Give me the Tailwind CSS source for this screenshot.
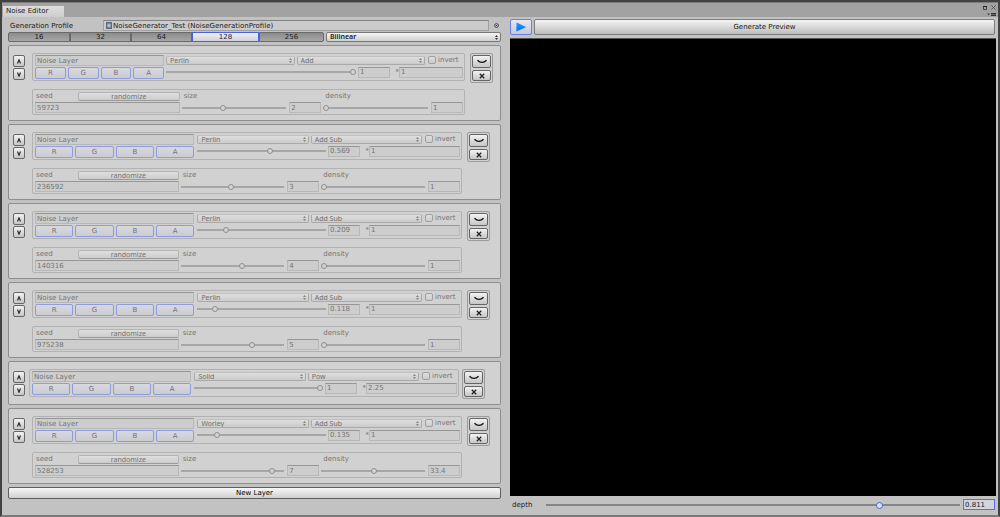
<!DOCTYPE html>
<html lang="en">
<head>
<meta charset="utf-8">
<title>Noise Editor</title>
<script src="https://cdn.jsdelivr.net/npm/@tailwindcss/browser@4"></script>
</head>
<body class="min-h-screen flex flex-col bg-[#c2c2c2] border-x-2 border-t-2 border-[#424242] border-b-2 border-b-[#7a7a7a] font-['DejaVu_Sans',sans-serif] text-[7px] leading-[10px] text-[#202020]">
  <header class="h-[15px] flex items-end justify-between bg-[#a2a2a2] border-t border-[#7c7c7c] pl-px pr-[2px]">
    <h1 class="w-[61px] h-[11px] pl-[3px] leading-[11px] bg-linear-to-b from-[#dedede] to-[#cecece]">Noise Editor</h1>
    <div class="flex flex-col items-end gap-[3px] pb-px">
      <div class="flex items-center gap-1">
        <button aria-label="Maximize" class="block"><svg class="block" width="4" height="4" viewBox="0 0 4 4"><path d="M.5 1v2.5h3V1" fill="none" stroke="#444"/><path d="M0 .5h4" stroke="#222"/></svg></button>
        <button aria-label="Close" class="block"><svg class="block" width="5" height="5" viewBox="0 0 5 5"><path d="M.3.3l4.4 4.4M4.700.3L.3 4.700" stroke="#555" stroke-width=".9"/></svg></button>
      </div>
      <button aria-label="Window menu" class="block"><svg class="block" width="9" height="3" viewBox="0 0 9 3"><path d="M0 .5h3L1.500 2.500z" fill="#444"/><path d="M4 .5h5M4 2.500h5" stroke="#333"/><path d="M4 1.500h5" stroke="#666"/></svg></button>
    </div>
  </header>

  <main class="flex-1 grid grid-cols-[493fr_486fr] gap-[9px] pl-[6px] pr-[2px]">
    <section class="flex flex-col gap-[3px] pt-[3px]">
      <div class="flex flex-col gap-px">
        <div class="flex items-center">
          <label for="profile" class="w-[95px] pl-[2px]">Generation Profile</label>
          <div class="flex-1 h-[11px] flex items-center gap-px border border-[#a0a0a0] border-t-[#828282] bg-[#cbcbcb] pl-[2px]">
            <svg width="6" height="7" viewBox="0 0 6 7"><path d="M0 0h6v7H0z" fill="#5d6c74"/><path d="M1 1.500h4v4H1z" fill="#8fa3ac"/><path d="M2 2.500h2v2H2z" fill="#b9c8cf"/></svg>
            <input id="profile" readonly value="NoiseGenerator_Test (NoiseGenerationProfile)" class="flex-1 min-w-0 h-[9px] outline-none">
          </div>
          <button aria-label="Select profile" class="w-[12px] flex justify-end pr-[2px]"><svg width="5" height="5" viewBox="0 0 5 5"><circle cx="2.500" cy="2.500" r="1.900" fill="none" stroke="#3a3a3a" stroke-width=".9"/><circle cx="2.500" cy="2.500" r=".6" fill="#333"/></svg></button>
        </div>
        <div class="grid grid-cols-[316fr_175fr] gap-[2px]">
          <div id="sizes" class="grid grid-cols-[62fr_61fr_61fr_67fr_65fr]"></div>
          <div class="relative">
            <select aria-label="Filter mode" class="block appearance-none w-full h-[10px] pl-[3px] leading-[8px] font-['Noto_Sans',sans-serif] font-semibold rounded-[2px] border border-[#777] bg-linear-to-b from-[#f5f5f5] to-[#cfcfcf]"><option>Bilinear</option></select>
            <svg class="absolute right-[3px] top-[3px] pointer-events-none" width="3" height="5" viewBox="0 0 3 5"><path d="M0 2L1.500 0 3 2zM0 3h3L1.500 5z" fill="#333"/></svg>
          </div>
        </div>
      </div>
      <div id="layers" class="flex flex-col gap-[3px]"></div>
      <button class="h-[12px] leading-[10px] rounded-[2px] border border-[#5e5e5e] bg-linear-to-b from-[#f7f7f7] to-[#d0d0d0] text-black">New Layer</button>
    </section>

    <section class="flex flex-col gap-[3px] pt-[2px] pb-[5px]">
      <div class="flex gap-[2px] pr-px">
        <button aria-label="Play" class="w-[22px] h-[16px] flex items-center justify-center rounded-[2px] border border-[#6a7de0] bg-linear-to-b from-[#e8e8f2] to-[#c4c8d8]"><svg width="10" height="10" viewBox="0 0 10 10"><path d="M.5.5L10 5 .5 9.500z" fill="#168cff"/><path d="M.5 5H10L.5 9.500z" fill="#086cdf" opacity=".4"/></svg></button>
        <button class="flex-1 h-[16px] rounded-[2px] border border-[#7c7c7c] bg-linear-to-b from-[#f5f5f5] to-[#bdbdbd]">Generate Preview</button>
      </div>
      <div class="flex-1 bg-black border-t border-[#555]"></div>
      <div class="flex items-center gap-[3px] pl-[2px] pr-px">
        <label for="depth" class="w-[31px]">depth</label>
        <input id="depth" type="range" min="0" max="1" step="0.001" value="0.811" class="flex-1 min-w-0 h-[8px] appearance-none bg-transparent [&::-webkit-slider-runnable-track]:h-[2px] [&::-webkit-slider-runnable-track]:bg-[#858585] [&::-webkit-slider-thumb]:appearance-none [&::-webkit-slider-thumb]:size-[7px] [&::-webkit-slider-thumb]:-mt-[2px] [&::-webkit-slider-thumb]:rounded-full [&::-webkit-slider-thumb]:border [&::-webkit-slider-thumb]:border-[#4a62d8] [&::-webkit-slider-thumb]:bg-[#e0e3f2]">
        <input aria-label="depth value" value="0.811" class="w-[32px] h-[11px] pl-px border border-[#5b70e0] bg-[#d2d4de] outline-none">
      </div>
    </section>
  </main>

<script>
const normal = {pad: 'pr-[10px]', indent: 'gap-[7px]', gap: 'gap-[5px]'};
const layers = [
  {...normal, wide: true, pad: 'pr-[7px]', type: 'Perlin', op: 'Add', amount: '1', factor: '1', seed: '59723', size: '2', sizePos: .39, density: '1', densityPos: 0},
  {...normal, type: 'Perlin', op: 'Add Sub', amount: '0.569', factor: '1', seed: '236592', size: '3', sizePos: .49, density: '1', densityPos: 0},
  {...normal, type: 'Perlin', op: 'Add Sub', amount: '0.209', factor: '1', seed: '140316', size: '4', sizePos: .6, density: '1', densityPos: 0},
  {...normal, type: 'Perlin', op: 'Add Sub', amount: '0.118', factor: '1', seed: '975238', size: '5', sizePos: .7, density: '1', densityPos: 0},
  {pad: 'pr-[15px]', indent: 'gap-[4px]', gap: 'gap-[3px]', type: 'Solid', op: 'Pow', amount: '1', factor: '2.25'},
  {...normal, type: 'Worley', op: 'Add Sub', amount: '0.135', factor: '1', seed: '528253', size: '7', sizePos: .9, density: '33.4', densityPos: .51}
];

const field = (id, label, value, cls) => `<input id="${id}" aria-label="${label}" disabled value="${value}" class="${cls} min-w-0 pl-px border border-[#b8b8b8] border-t-[#969696] bg-[#cdcdcd] text-[#747474]">`;

const slider = (label, pos) => `<input type="range" aria-label="${label}" disabled min="0" max="1" step="0.001" value="${pos}" class="flex-1 min-w-0 h-[8px] appearance-none bg-transparent [&::-webkit-slider-runnable-track]:h-[2px] [&::-webkit-slider-runnable-track]:bg-[#a6a6a6] [&::-webkit-slider-thumb]:appearance-none [&::-webkit-slider-thumb]:size-[6px] [&::-webkit-slider-thumb]:-mt-[2px] [&::-webkit-slider-thumb]:rounded-full [&::-webkit-slider-thumb]:border [&::-webkit-slider-thumb]:border-[#8e8e8e] [&::-webkit-slider-thumb]:bg-[#d4d4d4]">`;

const popup = (label, value) => `<div class="relative flex-1">
  <select aria-label="${label}" disabled class="block appearance-none w-full h-[9px] pl-[3px] leading-[7px] font-['Noto_Sans',sans-serif] opacity-100 rounded-[2px] border border-[#aaa] border-t-[#c0c0c0] bg-linear-to-b from-[#dedede] to-[#cbcbcb] text-[#707070]"><option>${value}</option></select>
  <svg class="absolute right-[3px] top-[2px] pointer-events-none" width="3" height="5" viewBox="0 0 3 5"><path d="M0 2L1.500 0 3 2zM0 3h3L1.500 5z" fill="#858585"/></svg>
</div>`;

const small = 'flex items-center justify-center rounded-[2px] border border-[#666] bg-linear-to-b from-[#f2f2f2] to-[#c6c6c6]';

document.getElementById('layers').innerHTML = layers.map((l, i) => `
<article class="flex items-start ${l.indent} pl-1 ${l.pad} pt-[7px] pb-[5px] rounded-[2px] border border-[#8e8e8e] bg-[#d1d1d1]">
  <div class="flex flex-col gap-px pt-[2px]">
    <button aria-label="Move up" class="${small} w-[12px] h-[12px]"><svg width="4" height="5" viewBox="0 0 4 5"><path d="M.5 4.500L2 .8l1.500 3.700" fill="none" stroke="#222" stroke-width="1.100"/></svg></button>
    <button aria-label="Move down" class="${small} w-[12px] h-[12px]"><svg width="4" height="5" viewBox="0 0 4 5"><path d="M.5.5L2 4.200 3.500.5" fill="none" stroke="#222" stroke-width="1.100"/></svg></button>
  </div>
  <div class="flex-1 min-w-0 flex items-start ${l.gap}">
    <div class="flex-1 min-w-0 flex flex-col gap-2">
      <div class="h-[28px] grid ${l.wide ? 'grid-cols-[129fr_297fr] gap-[2px]' : 'grid-cols-[159fr_262fr] gap-[3px]'} p-px pl-[2px] rounded-[2px] border border-[#b2b2b2]">
        <div class="flex flex-col gap-px">
          ${field('name' + i, 'Layer name', 'Noise Layer', 'w-full h-[11px]')}
          <div class="grid grid-cols-4 gap-[2px]">
            ${['R', 'G', 'B', 'A'].map(c => `<button disabled class="h-[12px] leading-[10px] rounded-[2px] border border-[#8f9bdc] bg-linear-to-b from-[#d8d9de] to-[#cbccd2] text-[#747474]">${c}</button>`).join('')}
          </div>
        </div>
        <div class="flex flex-col gap-[2px] min-w-0">
          <div class="flex items-center gap-[2px] h-[10px]">
            ${popup('Noise type', l.type)}
            ${popup('Blend mode', l.op)}
            <label class="w-[36px] pl-px flex items-center gap-[2px] text-[#747474]"><input type="checkbox" disabled class="shrink-0 appearance-none size-[8px] rounded-[2px] border border-[#a0a0a0] bg-linear-to-b from-[#dedede] to-[#cccccc]">invert</label>
          </div>
          <div class="flex items-center gap-[2px] h-[10px]">
            ${slider('Amount', l.amount)}
            ${field('amount' + i, 'Amount value', l.amount, 'w-[32px] h-[11px]')}
            <label for="factor${i}" class="w-[7px] text-right text-[#747474] -mr-[2px]">*</label>
            ${field('factor' + i, 'Factor', l.factor, l.wide ? 'w-[64px] h-[11px]' : 'w-[91px] h-[11px]')}
          </div>
        </div>
      </div>
      ${l.seed ? `<div class="grid grid-cols-[29fr_28fr_28fr] gap-[2px] p-px pl-[2px] rounded-[2px] border border-[#b2b2b2] text-[#747474]">
        <div class="min-w-0 flex flex-col gap-px">
          <div class="flex items-center h-[10px]">
            <label for="seed${i}" class="w-[43px] pl-px">seed</label>
            <button disabled class="flex-1 h-[9px] leading-[7px] font-['Noto_Sans',sans-serif] rounded-[2px] border border-[#b4b4b4] border-b-[#999] bg-linear-to-b from-[#dedede] to-[#cdcdcd]">randomize</button>
          </div>
          ${field('seed' + i, 'Seed', l.seed, 'w-full h-[11px]')}
        </div>
        <div class="min-w-0 flex flex-col gap-px">
          <label for="size${i}" class="pl-[2px]">size</label>
          <div class="flex items-center gap-[3px] h-[11px]">${slider('Size', l.sizePos)}${field('size' + i, 'Size value', l.size, 'w-[32px] h-[11px]')}</div>
        </div>
        <div class="min-w-0 flex flex-col gap-px">
          <label for="density${i}" class="pl-[2px]">density</label>
          <div class="flex items-center gap-[3px] h-[11px]">${slider('Density', l.densityPos)}${field('density' + i, 'Density value', l.density, 'w-[32px] h-[11px]')}</div>
        </div>
      </div>` : ''}
    </div>
    <div class="w-[23px] flex flex-col gap-[2px] p-px rounded-[2px] border border-[#9c9c9c]">
      <button aria-label="Collapse layer" class="${small} h-[13px]"><svg width="10" height="5" viewBox="0 0 10 5"><path d="M.5 1.200C3 4 7 4 9.500 1.200" fill="none" stroke="#111" stroke-width="1.300"/></svg></button>
      <button aria-label="Remove layer" class="${small} h-[11px]"><svg width="6" height="6" viewBox="0 0 6 6"><path d="M.8.8l4.400 4.400M5.200.8L.8 5.200" stroke="#222" stroke-width="1.300"/></svg></button>
    </div>
  </div>
</article>`).join('');

document.getElementById('sizes').innerHTML = ['16', '32', '64', '128', '256'].map(s =>
  `<button class="h-[10px] leading-[8px] border ${s === '128' ? 'border-[#4a62e0] bg-linear-to-b from-[#f0f0f6] to-[#cfd0da]' : 'border-[#6a6a6a] bg-linear-to-b from-[#8c8c8c] to-[#a6a6a6] first:rounded-l-[2px] last:rounded-r-[2px]'}">${s}</button>`).join('');
</script>
</body>
</html>
